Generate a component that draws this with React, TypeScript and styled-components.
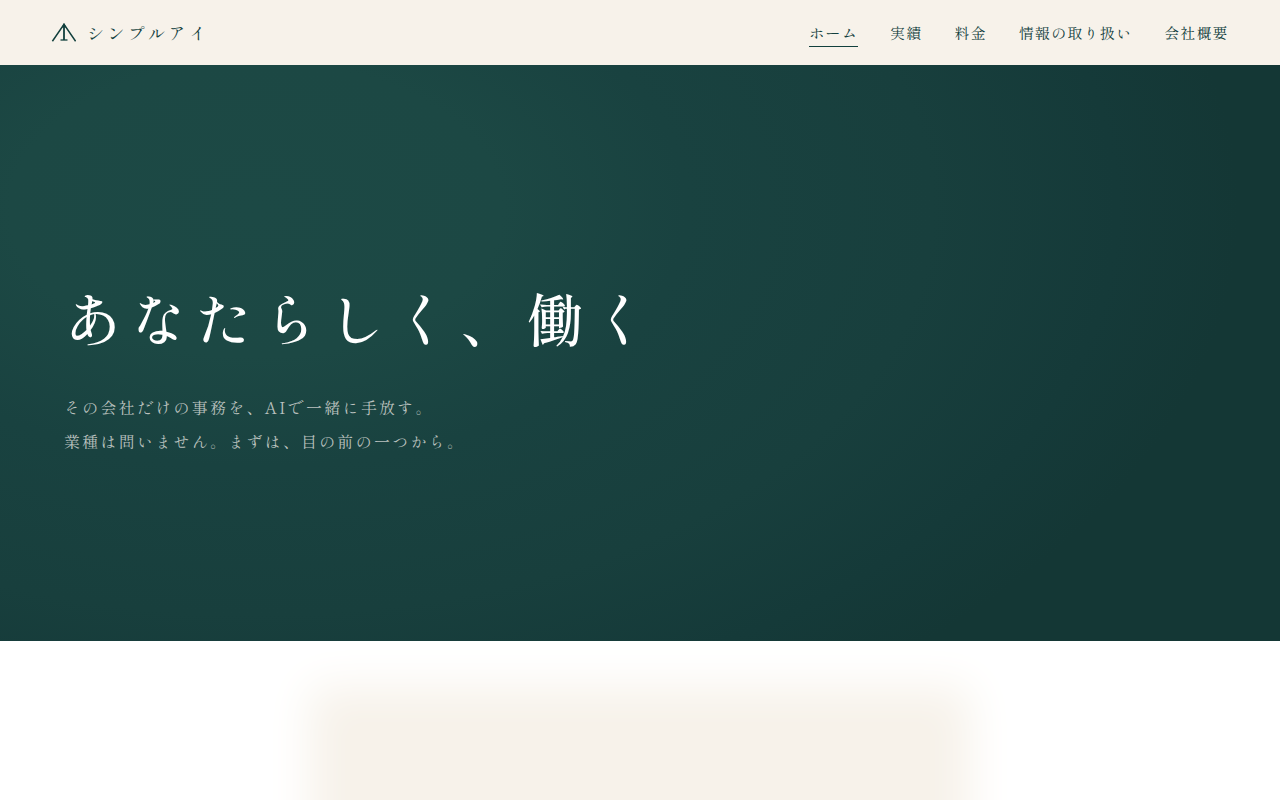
import React from "react";
import styled, { createGlobalStyle } from "styled-components";

const ink = "#12403d";
const cream = "#f7f2ea";

const GlobalStyle = createGlobalStyle`
  *, *::before, *::after { box-sizing: border-box; }
  body {
    margin: 0;
    background: #ffffff;
    color: ${ink};
    font-family: "Shippori Mincho", "Noto Serif CJK JP", "Noto Serif JP", "Liberation Serif", "Noto Sans CJK JP", serif;
    font-weight: 400;
  }
`;

const Header = styled.header`
  display: flex;
  align-items: center;
  justify-content: space-between;
  min-height: 65px;
  padding: 0 51px;
  background: ${cream};
`;

const Brand = styled.a`
  display: flex;
  align-items: center;
  gap: 11px;
  color: ${ink};
  font-size: 17px;
  line-height: 24px;
  letter-spacing: 0.2em;
  text-decoration: none;
`;

const Mark = styled.svg`
  display: block;
  width: 25px;
  height: 22px;
`;

const NavList = styled.ul`
  display: flex;
  gap: 32px;
  margin: 0;
  padding: 0;
  list-style: none;
`;

const NavLink = styled.a<{ $active?: boolean }>`
  display: block;
  padding: 4px 0 2px;
  border-bottom: 1px solid ${({ $active }) => ($active ? ink : "transparent")};
  color: ${ink};
  font-size: 15px;
  line-height: 22px;
  letter-spacing: 0.08em;
  text-decoration: none;
  white-space: nowrap;
`;

const Hero = styled.section`
  display: flex;
  flex-direction: column;
  justify-content: center;
  min-height: 72vh;
  padding: 28px 64px 0;
  background: radial-gradient(
    ellipse 120% 160% at 20% 25%,
    #1c4945 0%,
    #1c4844 16%,
    #194240 28%,
    #183f3d 44%,
    #153a39 56%,
    #143735 64%
  );
`;

const Title = styled.h1`
  margin: 0 0 32px;
  color: #ffffff;
  font-size: 58px;
  font-weight: 500;
  line-height: 82px;
  letter-spacing: 8px;
`;

const Lead = styled.p`
  margin: 0;
  color: #bac1bf;
  font-size: 16px;
  font-weight: 400;
  line-height: 34px;
  letter-spacing: 0.14em;
`;

const Intro = styled.section`
  padding: 96px 24px;
  overflow: hidden;
`;

const SoftPanel = styled.div`
  max-width: 560px;
  height: 320px;
  margin: 0 auto;
  background: ${cream};
  box-shadow: 0 0 42px 50px ${cream};
`;

const navItems = ["ホーム", "実績", "料金", "情報の取り扱い", "会社概要"];

export default function App() {
  return (
    <>
      <GlobalStyle />
      <Header>
        <Brand href="#home">
          <Mark viewBox="0 0 25 22" fill="none" stroke="currentColor" aria-hidden="true">
            <path d="M1.4 19.2 L13 2.4 L24.6 19.2" strokeWidth="1.5" />
            <path d="M13 2.4 V18" strokeWidth="1.8" />
            <path d="M9.5 18 H16.5" strokeWidth="1.3" />
            <path d="M13 1 L15.4 5.6 H10.6 Z" fill="currentColor" stroke="none" />
          </Mark>
          シンプルアイ
        </Brand>
        <nav aria-label="メイン">
          <NavList>
            {navItems.map((item, i) => (
              <li key={item}>
                <NavLink href={`#${item}`} $active={i === 0} aria-current={i === 0 ? "page" : undefined}>
                  {item}
                </NavLink>
              </li>
            ))}
          </NavList>
        </nav>
      </Header>
      <main>
        <Hero>
          <Title>あなたらしく、働く</Title>
          <Lead>
            その会社だけの事務を、AIで一緒に手放す。
            <br />
            業種は問いません。まずは、目の前の一つから。
          </Lead>
        </Hero>
        <Intro>
          <SoftPanel />
        </Intro>
      </main>
    </>
  );
}
